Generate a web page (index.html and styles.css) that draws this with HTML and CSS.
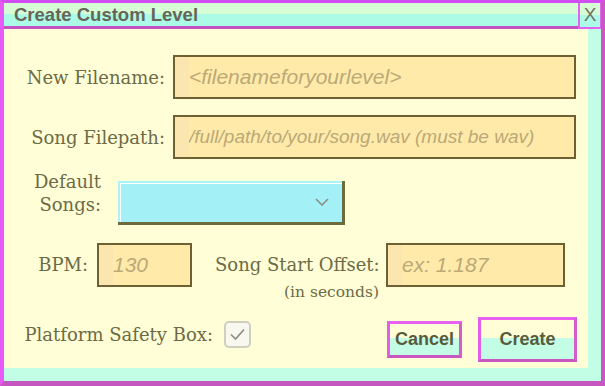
FILE: index.html
```html
<!DOCTYPE html>
<html>
<head>
<meta charset="utf-8">
<link rel="stylesheet" href="styles.css">
</head>
<body>
<div class="window">
  <div class="titlebar">
    <div class="title">Create Custom Level</div>
    <div class="close">X</div>
  </div>
  <div class="content">
    <div class="row row1">
      <label class="lbl lbl-wide">New Filename:</label>
      <input class="field field-wide" type="text" placeholder="<filenameforyourlevel>">
    </div>
    <div class="row row2">
      <label class="lbl lbl-wide">Song Filepath:</label>
      <input class="field field-wide field-small" type="text" placeholder="/full/path/to/your/song.wav (must be wav)">
    </div>
    <div class="row row3">
      <label class="lbl lbl-songs">Default<br>Songs:</label>
      <div class="select">
        <svg class="chev" width="14" height="8" viewBox="0 0 14 8"><polyline points="1,1 7,7 13,1" fill="none" stroke="#8b8f86" stroke-width="1.6"/></svg>
      </div>
    </div>
    <div class="row row4">
      <label class="lbl lbl-bpm">BPM:</label>
      <input class="field field-bpm" type="text" placeholder="130">
      <div class="offset-lbl">
        <div class="offset-main">Song Start Offset:</div>
        <div class="offset-sub">(in seconds)</div>
      </div>
      <input class="field field-offset" type="text" placeholder="ex: 1.187">
    </div>
    <div class="row row5">
      <div class="safety">
        <label class="lbl lbl-safety">Platform Safety Box:</label>
        <div class="check">
          <svg width="23" height="23" viewBox="0 0 23 23"><polyline points="5,11.5 9.5,16 18,6.5" fill="none" stroke="#8e8e86" stroke-width="1.7"/></svg>
        </div>
      </div>
      <div class="btn btn-cancel">Cancel</div>
      <div class="btn btn-create">Create</div>
    </div>
  </div>
</div>
</body>
</html>
```

FILE: styles.css
```css
html, body {
  margin: 0;
  padding: 0;
}

.window {
  width: 605px;
  height: 386px;
  box-sizing: border-box;
  border-style: solid;
  border-width: 3px 4px 5px 4px;
  border-color: #d24ef2 #c857c2 #c555bf #e85af7;
  background: #c2fde6;
  display: flex;
  flex-direction: column;
  overflow: hidden;
}

.titlebar {
  height: 23px;
  flex: none;
  display: flex;
  align-items: center;
  background: linear-gradient(#d6fdd4 0 11px, #abfbe6 11px);
  border-bottom: 3px solid #c452c0;
}

.title {
  margin-left: 10px;
  font-family: "Liberation Sans", Arial, sans-serif;
  font-weight: bold;
  font-size: 18.5px;
  color: #666658;
  line-height: 23px;
}

.close {
  margin-left: auto;
  margin-top: -3px;
  margin-bottom: -3px;
  margin-right: -1px;
  width: 24px;
  height: 28px;
  box-sizing: border-box;
  border: 2px solid #e262f2;
  background: linear-gradient(#d6fdd4 0 12px, #abfbe6 12px);
  font-family: "Liberation Sans", Arial, sans-serif;
  font-size: 19px;
  color: #727266;
  display: flex;
  align-items: center;
  justify-content: center;
}

.content {
  flex: 1;
  min-height: 0;
  background: #fffed6;
  margin: 0 13px 13px 0;
  display: flex;
  flex-direction: column;
}

.row {
  display: flex;
  align-items: center;
}

.row1 { margin-top: 26px; }
.row2 { margin-top: 16px; }
.row3 { margin-top: 22px; align-items: flex-start; }
.row4 { margin-top: 18px; align-items: flex-start; height: 44px; }
.row5 { margin-top: 30px; padding-right: 11px; }

.lbl {
  font-family: "DejaVu Serif", Georgia, serif;
  font-size: 18px;
  color: #6c6b47;
  text-align: right;
  white-space: nowrap;
  flex: none;
}

.lbl-wide { width: 161px; margin-right: 8px; }

.field {
  height: 44px;
  box-sizing: border-box;
  border: 2px solid #6e6033;
  background: linear-gradient(90deg, #fbe6b0 0 14px, #ffeaa9 14px);
  font-family: "Liberation Sans", Arial, sans-serif;
  font-style: italic;
  font-size: 21px;
  padding: 0 0 0 14px;
  color: #6c6b47;
  outline: none;
  margin: 0;
  flex: none;
}

.field::placeholder {
  color: #bba977;
  opacity: 1;
}

.field-wide { width: 403px; }
.field-small { font-size: 19px; }

.lbl-songs {
  width: 97px;
  margin-right: 17px;
  line-height: 23px;
  margin-top: -11px;
}

.select {
  width: 227px;
  height: 44px;
  box-sizing: border-box;
  border-right: 3px solid #6d6a3c;
  border-bottom: 3px solid #6d6a3c;
  background: #a3f1f6;
  box-shadow: inset 2px 2px 0 #a8f4f8, inset 3px 3px 0 #ffffff;
  display: flex;
  align-items: center;
  justify-content: flex-end;
  padding-right: 13px;
}

.chev { display: block; margin-top: 1px; }

.lbl-bpm {
  width: 84px;
  margin-right: 9px;
  line-height: 44px;
}

.field-bpm { width: 95px; }

.offset-lbl {
  width: 164px;
  margin-left: 23px;
  margin-right: 7px;
  font-family: "DejaVu Serif", Georgia, serif;
  color: #6c6b47;
  text-align: right;
  white-space: nowrap;
  flex: none;
}

.offset-main {
  font-size: 18px;
  line-height: 44px;
}

.offset-sub {
  font-size: 15.5px;
  line-height: 16px;
  margin-top: -3px;
}

.field-offset { width: 179px; }

.safety {
  display: flex;
  align-items: center;
  margin-bottom: 10px;
}

.lbl-safety {
  width: 209px;
  margin-right: 11px;
}

.check {
  width: 27px;
  height: 27px;
  box-sizing: border-box;
  border: 2px solid #cfcfc0;
  border-radius: 5px;
  background: #f8f8ef;
  display: flex;
  align-items: center;
  justify-content: center;
}

.check svg { display: block; }

.btn {
  box-sizing: border-box;
  border-style: solid;
  border-width: 3px;
  border-color: #e760f0 #d65ccc #c957bf #e05ee8;
  background: linear-gradient(#fffed6 0 45%, #c4fde6 45%);
  font-family: "Liberation Sans", Arial, sans-serif;
  font-weight: bold;
  font-size: 18px;
  color: #575b3c;
  display: flex;
  align-items: center;
  justify-content: center;
}

.btn-cancel {
  margin-left: auto;
  width: 75px;
  height: 37px;
  margin-right: 16px;
}

.btn-create {
  width: 99px;
  height: 45px;
}
```
